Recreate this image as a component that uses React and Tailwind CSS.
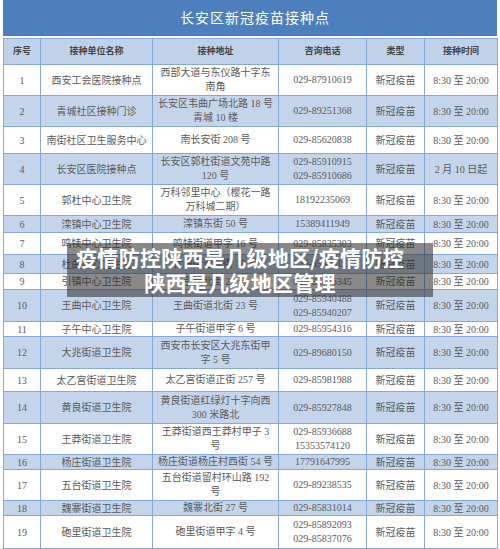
import React from "react";

const rows = [
  { h: 31, name: "西安工会医院接种点", addr: ["西部大道与东仪路十字东", "南角"], tel: ["029-87910619"] },
  { h: 31, name: "青城社区接种门诊", addr: ["长安区韦曲广场北路 18 号", "青城 10 楼"], tel: ["029-89251368"] },
  { h: 27, name: "南街社区卫生服务中心", addr: ["南长安街 208 号"], tel: ["029-85620838"] },
  { h: 31, name: "长安区医院接种点", addr: ["长安区郭杜街道文苑中路", "120 号"], tel: ["029-85910915", "029-85910686"], time: "2 月 10 日起" },
  { h: 31, name: "郭杜中心卫生院", addr: ["万科邻里中心（樱花一路", "万科城二期）"], tel: ["18192235069"] },
  { h: 17, name: "滦镇中心卫生院", addr: ["滦镇东街 50 号"], tel: ["15389411949"] },
  { h: 22, name: "鸣犊中心卫生院", addr: ["鸣犊街道甲字 16 号"], tel: ["029-85835303"] },
  { h: 19, name: "杜曲中心卫生院", addr: ["杜曲街道东街 18 号"], tel: ["029-85838113"] },
  { h: 16, name: "引镇中心卫生院", addr: ["引镇北街 29 号"], tel: ["029-85866345"] },
  { h: 32, name: "王曲中心卫生院", addr: ["王曲街道北街 23 号"], tel: ["029-85940488", "029-85940207"] },
  { h: 14, name: "子午中心卫生院", addr: ["子午街道甲字 6 号"], tel: ["029-85954316"] },
  { h: 32, name: "大兆街道卫生院", addr: ["西安市长安区大兆东街甲", "字 5 号"], tel: ["029-89680150"] },
  { h: 23, name: "太乙宫街道卫生院", addr: ["太乙宫街道正街 257 号"], tel: ["029-85981988"] },
  { h: 32, name: "黄良街道卫生院", addr: ["黄良街道红绿灯十字向西", "300 米路北"], tel: ["029-85927848"] },
  { h: 31, name: "王莽街道卫生院", addr: ["王莽街道西王莽村甲子 3", "号"], tel: ["029-85936688", "15353574120"] },
  { h: 14, name: "杨庄街道卫生院", addr: ["杨庄街道杨庄村西街 54 号"], tel: ["17791647995"] },
  { h: 31, name: "五台街道卫生院", addr: ["五台街道留村环山路 192", "号"], tel: ["029-89238535"] },
  { h: 12, name: "魏寨街道卫生院", addr: ["魏寨北街 27 号"], tel: ["029-85831014"] },
  { h: 33, name: "砲里街道卫生院", addr: ["砲里街道甲字 4 号"], tel: ["029-85892093", "029-85837076"] },
];

const Lines = ({ items }) =>
  items.map((t, i) => (
    <React.Fragment key={i}>
      {i > 0 && <br />}
      {t}
    </React.Fragment>
  ));

const App = () => {
  return (
    <div className="relative w-[500px] h-[549px] overflow-hidden bg-white px-[3px] font-['Liberation_Serif','Noto_Sans_CJK_SC',serif] text-[#5a5a5a]">
      <div className="h-[36px] bg-[#4d7fbf] flex items-center justify-center pl-[10px] text-[14px] tracking-[1px] text-white">
        长安区新冠疫苗接种点
      </div>
      <table className="mt-[2px] w-[494px] table-fixed border-collapse text-center text-[10px] leading-[11px]">
        <colgroup>
          <col className="w-[37px]" />
          <col className="w-[112px]" />
          <col className="w-[126px]" />
          <col className="w-[88px]" />
          <col className="w-[58px]" />
          <col className="w-[73px]" />
        </colgroup>
        <thead>
          <tr className="h-[26px] bg-[#c0d2ea] font-bold text-[9px] text-[#444]">
            <th className="border border-[#86a8d6] p-0">序号</th>
            <th className="border border-[#86a8d6] p-0">接种单位名称</th>
            <th className="border border-[#86a8d6] p-0">接种地址</th>
            <th className="border border-[#86a8d6] p-0">咨询电话</th>
            <th className="border border-[#86a8d6] p-0">类型</th>
            <th className="border border-[#86a8d6] p-0">接种时间</th>
          </tr>
        </thead>
        <tbody>
          {rows.map((r, i) => (
            <tr
              key={i}
              style={{ height: r.h }}
              className={i % 2 === 1 ? "bg-[#c4d5eb]" : "bg-white"}
            >
              <td className="border border-[#86a8d6] p-0 whitespace-nowrap">{i + 1}</td>
              <td className="border border-[#86a8d6] p-0 whitespace-nowrap">{r.name}</td>
              <td className="border border-[#86a8d6] p-0 whitespace-nowrap overflow-hidden leading-[14px]">
                <Lines items={r.addr} />
              </td>
              <td className="border border-[#86a8d6] p-0 whitespace-nowrap leading-[14px]">
                <Lines items={r.tel} />
              </td>
              <td className="border border-[#86a8d6] p-0 whitespace-nowrap">新冠疫苗</td>
              <td className="border border-[#86a8d6] p-0 whitespace-nowrap">{r.time || "8:30 至 20:00"}</td>
            </tr>
          ))}
        </tbody>
      </table>

      <div className="absolute left-[67px] top-[243px] w-[366px] h-[54px] bg-[rgba(40,40,40,0.55)] pl-[4px] pr-[24px] pt-[2px] text-center font-['Noto_Sans_CJK_SC',sans-serif] text-[21px] leading-[25px] font-bold tracking-[0.3px] text-white">
        疫情防控陕西是几级地区/疫情防控
        <br />
        陕西是几级地区管理
      </div>
    </div>
  );
};

export default App;
